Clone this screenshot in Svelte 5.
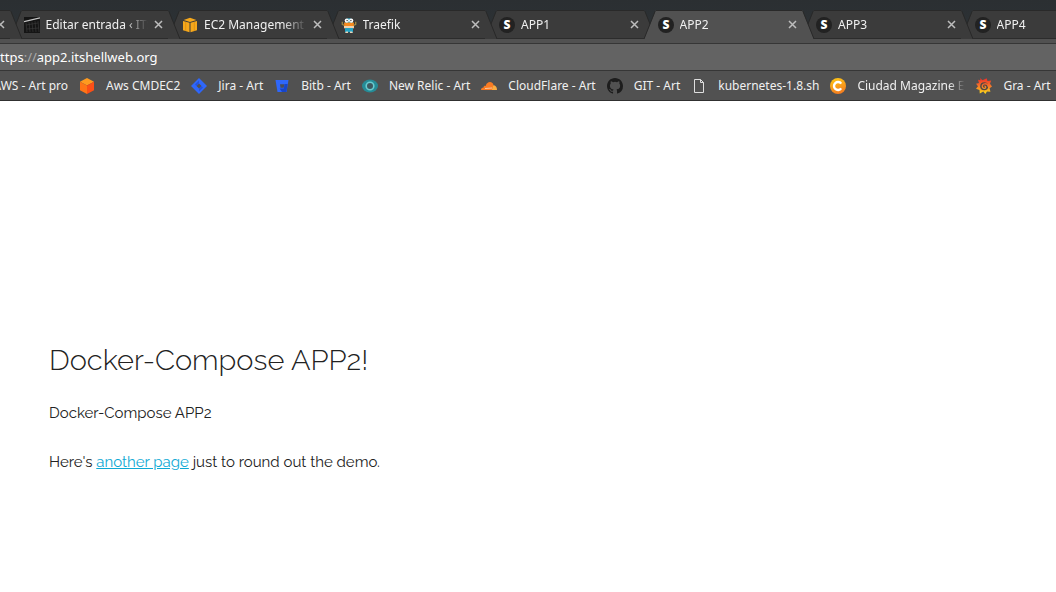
<script>
  const tabs = [
    { icon: 'none', title: '' },
    { icon: 'editor', title: 'Editar entrada ‹ ITS' },
    { icon: 'aws', title: 'EC2 Management C' },
    { icon: 'traefik', title: 'Traefik' },
    { icon: 'skeleton', title: 'APP1' },
    { icon: 'skeleton', title: 'APP2', active: true },
    { icon: 'skeleton', title: 'APP3' },
    { icon: 'skeleton', title: 'APP4' }
  ];
  const bookmarks = [
    { icon: 'cube', title: 'Aws CMDEC2' },
    { icon: 'jira', title: 'Jira - Art' },
    { icon: 'bitbucket', title: 'Bitb - Art' },
    { icon: 'relic', title: 'New Relic - Art' },
    { icon: 'cloud', title: 'CloudFlare - Art' },
    { icon: 'github', title: 'GIT - Art' },
    { icon: 'file', title: 'kubernetes-1.8.sh' },
    { icon: 'ciudad', title: 'Ciudad Magazine  El', long: true },
    { icon: 'grafana', title: 'Gra - Art' }
  ];
</script>

{#snippet icon(name)}
  <svg class="icon" viewBox="0 0 16 16" aria-hidden="true">
    {#if name === 'editor'}
      <path fill="#151515" d="M0 0h16v16H0z" />
      <path stroke="#c4c4c4" stroke-width="1.2" d="M0 4.6 16 .8" />
      <path stroke="#3c3c3c" stroke-width=".6" fill="none" d="M2 6l1 9M5 5l1 10M8 5l1 10M11 4l1 11M14 4l1 11M2 8l12-2M3 12l12-1" />
    {:else if name === 'aws'}
      <path fill="#f6a81c" d="M8 0.8 14.4 3 8 5 1.6 3zM1 4l6.5 1.8v9.4L1 13.2zM15 4 8.5 5.8v9.4l6.5-2z" />
      <path fill="#c87f0c" d="M3.2 4.6l1 .3v9.2l-1-.3zM11.8 4.9l1-.3v9.2l-1 .3z" opacity=".5" />
    {:else if name === 'traefik'}
      <path stroke="#9b8a45" stroke-width="1.3" fill="none" d="M1.300 4.800v2.500L4 8.800M14.700 4.800v2.500L12 8.800" />
      <path fill="#37abc8" d="M4 4c0-3.800 8-3.800 8 0v4H4z" />
      <path fill="#f68a1f" d="M3 5.500h10l-.5 5.500h-9z" />
      <circle cx="5.800" cy="3.600" r="2.100" fill="#fff" />
      <circle cx="10.200" cy="3.600" r="2.100" fill="#fff" />
      <circle cx="6.100" cy="3.600" r=".7" fill="#222" />
      <circle cx="9.900" cy="3.600" r=".7" fill="#222" />
      <path fill="#efd2ae" d="M3 9h10v2.300H3z" />
      <path fill="#24a1c1" d="M4 11h8v4.200H4z" />
      <path fill="#e6d4b9" d="M5 14.500h2V16H4zM9 14.500h2l1 1.500H9z" />
    {:else if name === 'skeleton'}
      <circle cx="8" cy="8" r="8" fill="#222" />
      <text x="8" y="12" text-anchor="middle">S</text>
    {:else if name === 'cube'}
      <path fill="#ff9a1f" d="M8 0 15 3.700 8 7.500 1 3.700z" />
      <path fill="#ff7416" d="M1 3.700 8 7.500V16l-7-3.800z" />
      <path fill="#fb4f17" d="M15 3.700 8 7.500V16l7-3.800z" />
    {:else if name === 'jira'}
      <path fill="#2f67fa" d="M8 0l8 8-8 8-8-8zM8 5.500 5.500 8 8 10.500 10.500 8z" fill-rule="evenodd" />
      <path fill="#2453dd" d="M8 2.500v3L5.500 8 4 6.500zM8 13.500v-3L10.500 8l1.500 1.500z" />
    {:else if name === 'bitbucket'}
      <path fill="#2f67fa" d="M1.500 2h13l-2 12h-9z" />
      <path fill="#1745c9" d="M10.500 6h3.200l-1.300 8H8l-2.400-3.500h4.200z" />
      <path fill="#4a4d58" d="M6 6.300h4.300l-.6 3.500H6.500z" />
    {:else if name === 'relic'}
      <ellipse cx="8" cy="8" rx="8" ry="6.500" fill="#258b96" />
      <circle cx="8" cy="8" r="3.800" fill="#3d5960" stroke="#69cbd0" stroke-width="1.600" />
    {:else if name === 'cloud'}
      <path fill="#f97b23" d="M0 12c0-1.700 1-2.700 2.600-2.600C2.500 8 3.800 7.500 4.700 8c.7-3 2.500-4 4.200-4 2 0 3.300 1.400 3.600 3l-1 5z" />
      <path fill="#fbad41" d="M10.800 12 12.300 7.200C14.500 7.200 16 9 16 12z" />
      <path stroke="#f7d9c2" stroke-width=".8" d="M4 10.500l7-.5" />
    {:else if name === 'github'}
      <path fill="#1d1d1d" d="M8 0C3.58 0 0 3.58 0 8c0 3.54 2.29 6.53 5.47 7.59.4.07.55-.17.55-.38v-1.49c-2.01.37-2.53-.49-2.69-.94-.09-.23-.48-.94-.82-1.13-.28-.15-.68-.52-.01-.53.63-.01 1.08.58 1.23.82.72 1.21 1.87.87 2.33.66.07-.52.28-.87.51-1.07-1.78-.2-3.64-.89-3.64-3.95 0-.87.31-1.59.82-2.15-.08-.2-.36-1.02.08-2.12 0 0 .67-.21 2.2.82a7.5 7.5 0 0 1 4 0c1.53-1.04 2.2-.82 2.2-.82.44 1.1.16 1.92.08 2.12.51.56.82 1.27.82 2.15 0 3.07-1.87 3.75-3.65 3.95.29.25.54.73.54 1.48v2.2c0 .21.15.46.55.38A8.01 8.01 0 0 0 16 8c0-4.42-3.58-8-8-8z" />
    {:else if name === 'file'}
      <path fill="none" stroke="#dedede" d="M3.500 1.500h6l3 3v10h-9zM9.500 1.500v3h3" />
    {:else if name === 'ciudad'}
      <defs>
        <linearGradient id="sun" x1=".2" y1="0" x2=".5" y2="1">
          <stop offset="0" stop-color="#ffc715" />
          <stop offset="1" stop-color="#f47c20" />
        </linearGradient>
      </defs>
      <circle cx="8" cy="8" r="8" fill="url(#sun)" />
      <path fill="none" stroke="#fff" stroke-width="2.400" d="M11.200 5.600A4 4 0 1 0 11.200 10.400" />
    {:else if name === 'grafana'}
      <defs>
        <linearGradient id="fire" gradientUnits="userSpaceOnUse" x1="0" y1="0" x2="0" y2="16">
          <stop offset="0" stop-color="#ee2b27" />
          <stop offset=".5" stop-color="#f4762a" />
          <stop offset="1" stop-color="#fce215" />
        </linearGradient>
      </defs>
      <path fill="url(#fire)" d="M4 0 6.500 2.200 10.700.2l.8 2.800 3.700-.5-1.200 3.300L16 8.600l-2.400 1.600.8 3.600-3.400-.4L9.300 16l-2-2.400-3.500 1.800-.3-3.500L0 10.800l2-2.500L0 5.800l3-.9L2 1.800l2.500.5z" />
      <circle cx="8.200" cy="8.300" r="4" fill="#514843" />
      <path fill="none" stroke="url(#fire)" stroke-width="1.400" d="M12.500 8.800C12 6.800 10.300 5.600 8.500 5.900 6.600 6.200 5.900 7.900 6.500 9.300c.6 1.400 2.600 1.500 3.100.1.200-.8-.4-1.400-1.200-1.200" />
    {/if}
  </svg>
{/snippet}

<div class="browser">
  <nav class="strip" aria-label="Tabs">
    {#each tabs as tab}
      <div class="tab" class:active={tab.active}>
        <svg class="cap" viewBox="0 0 12 29" aria-hidden="true">
          <path class="fill" d="M0 29 11 2 12 0v29z" />
          <path class="edge" d="M0 29 11 1.500 12 .5" />
        </svg>
        <div class="face">
          {#if tab.title}
            <button class="title">{@render icon(tab.icon)}<span>{tab.title}</span></button>
          {/if}
          <button class="close" aria-label="Close tab">
            <svg viewBox="0 0 9 9" aria-hidden="true"><path d="M1 1l7 7M8 1 1 8" /></svg>
          </button>
        </div>
        <svg class="cap" viewBox="0 0 12 29" aria-hidden="true">
          <path class="fill" d="M12 29 1 2 0 0v29z" />
          <path class="edge" d="M12 29 1 1.500 0 .5" />
        </svg>
      </div>
    {/each}
  </nav>

  <div class="address" aria-label="Address">
    <span>https<i>://</i>app2.itshellweb.org</span>
  </div>

  <nav class="bookmarks" aria-label="Bookmarks">
    <div class="first"><a href="#aws">AWS - Art pro</a></div>
    {#each bookmarks as mark}
      <a href="#{mark.icon}">{@render icon(mark.icon)}<span class:long={mark.long}>{mark.title}</span></a>
    {/each}
  </nav>
</div>

<main>
  <h1>Docker-Compose APP2!</h1>
  <p>Docker-Compose APP2</p>
  <p>Here's <a href="#another">another page</a> just to round out the demo.</p>
</main>

<style>
  :global(body) {
    margin: 0;
    background: #fff;
  }
  .browser {
    overflow: hidden;
    background: #515151;
    border-bottom: 1px solid #303030;
    color: #f0f0f0;
    font: 12px/16px "Noto Sans", sans-serif;
  }
  button {
    padding: 0;
    border: 0;
    background: none;
    color: inherit;
    font: inherit;
  }
  .icon {
    flex: none;
    width: 16px;
    height: 16px;
  }
  .icon text {
    fill: #fff;
    font: 800 12px "Open Sans", sans-serif;
  }
  .strip {
    display: flex;
    padding-top: 10px;
    margin: 0 -75px 0 -137px;
    background: linear-gradient(#2b2f32, #2c3236);
  }
  .tab {
    --face: #3b3b3b;
    flex: 1 1 0;
    min-width: 0;
    display: flex;
    margin-left: -12px;
    height: 29px;
  }
  .tab:nth-child(1) { z-index: 8; }
  .tab:nth-child(2) { z-index: 7; }
  .tab:nth-child(3) { z-index: 6; }
  .tab:nth-child(4) { z-index: 5; }
  .tab:nth-child(5) { z-index: 4; }
  .tab:nth-child(7) { z-index: 3; }
  .tab:nth-child(8) { z-index: 2; }
  .tab.active {
    --face: #515151;
    z-index: 9;
  }
  .cap {
    flex: none;
    width: 12px;
    height: 29px;
  }
  .fill {
    fill: var(--face);
  }
  .edge {
    fill: none;
    stroke: #292929;
  }
  .face {
    flex: 1;
    min-width: 0;
    display: flex;
    align-items: center;
    box-sizing: border-box;
    padding-right: 5px;
    background: var(--face);
    border-top: 1px solid #292929;
    border-bottom: 1px solid #2c2c2c;
  }
  .active .face {
    border-bottom-color: var(--face);
  }
  .title {
    flex: 1;
    min-width: 0;
    display: flex;
    align-items: center;
    gap: 6px;
    padding-left: 2px;
    text-align: left;
  }
  .title span {
    flex: 1;
    overflow: hidden;
    white-space: nowrap;
    mask-image: linear-gradient(to left, transparent, #000 24px);
  }
  .close {
    display: flex;
    margin-left: auto;
    padding-left: 6px;
  }
  .close svg {
    width: 9px;
    height: 9px;
    fill: none;
    stroke: #bdbdbd;
    stroke-width: 1.5;
  }
  .address {
    margin-top: 4px;
    padding: 3px 0;
    border: solid #363636;
    border-width: 1px 0;
    background: #636363;
    color: #fff;
    font-size: 13px;
    line-height: 20px;
  }
  .address span {
    display: block;
    margin-left: -8px;
  }
  .address i {
    color: #aaa;
    font-style: normal;
  }
  .bookmarks {
    display: flex;
    gap: 11px;
    padding: 7px 0 6px;
    white-space: nowrap;
  }
  .bookmarks a {
    flex: none;
    display: flex;
    gap: 11px;
    color: inherit;
    text-decoration: none;
  }
  .first {
    flex: none;
    width: 68px;
    display: flex;
    justify-content: flex-end;
  }
  .long {
    width: 108px;
    overflow: hidden;
    mask-image: linear-gradient(to left, transparent, #000 16px);
  }
  main {
    padding: 235px 49px 0;
    color: #222;
    font: 15px/24px Raleway, Lato, sans-serif;
  }
  h1 {
    margin: 0 0 17px;
    font-size: 29px;
    line-height: 48px;
    font-weight: 300;
  }
  p {
    margin: 0 0 25px;
  }
  main a {
    color: #0fa9d4;
  }
</style>
